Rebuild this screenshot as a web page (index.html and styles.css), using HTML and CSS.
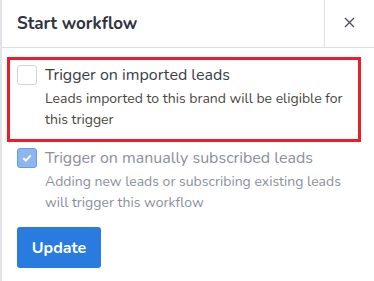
FILE: index.html
```html
<!DOCTYPE html>
<html lang="en">

<head>
    <meta charset="UTF-8">
    <meta name="viewport" content="width=device-width, initial-scale=1.0">
    <title>Start workflow</title>
    <link rel="stylesheet" href="styles.css">
</head>

<body>
    <div class="panel">
        <div class="header">
            <div class="title">Start workflow</div>
            <button class="close" aria-label="Close">
                <svg width="11" height="11" viewBox="0 0 11 11">
                    <path d="M1 1L10 10M10 1L1 10" stroke="#4a4d55" stroke-width="1.3" fill="none" />
                </svg>
            </button>
        </div>
        <form class="form">
            <label class="option highlight">
                <span class="check"></span>
                <span class="text">
                    <span class="label">Trigger on imported leads</span>
                    <span class="desc">Leads imported to this brand will be eligible for this trigger</span>
                </span>
            </label>
            <label class="option disabled">
                <span class="check checked">
                    <svg width="10" height="8" viewBox="0 0 10 8">
                        <path d="M1.2 4.2L3.8 6.6L8.8 1.4" stroke="#fff" stroke-width="2" fill="none" />
                    </svg>
                </span>
                <span class="text">
                    <span class="label">Trigger on manually subscribed leads</span>
                    <span class="desc">Adding new leads or subscribing existing leads will trigger this workflow</span>
                </span>
            </label>
            <div class="actions">
                <button type="button" class="update">Update</button>
            </div>
        </form>
    </div>
</body>

</html>
```

FILE: styles.css
```css
body {
    margin: 0;
    font-family: "Nunito", "Lato", sans-serif;
    background: #fff;
}

.panel {
    height: 281px;
    border-left: 2px solid #e2e4e9;
}

.header {
    display: flex;
    height: 47px;
    border-bottom: 1px solid #dcdfe5;
}

.title {
    flex: 1;
    display: flex;
    align-items: center;
    padding-left: 15px;
    font-size: 17px;
    font-weight: bold;
    color: #2f3340;
}

.close {
    width: 50px;
    border: none;
    border-left: 1px solid #dcdfe5;
    background: none;
    display: flex;
    align-items: center;
    justify-content: center;
    padding: 0 0 2px 0;
}

.form {
    display: flex;
    flex-direction: column;
    gap: 4px;
    padding: 12px 16px 0 8px;
}

.option {
    display: flex;
    gap: 8px;
    padding: 4px 7px 9px;
}

.highlight {
    outline: 3px solid #ec1c2a;
}

.check {
    flex: none;
    width: 18px;
    height: 18px;
    margin-top: 1px;
    border: 1px solid #cfd3da;
    border-radius: 3px;
    display: flex;
    align-items: center;
    justify-content: center;
}

.check.checked {
    background: #8db6ee;
    border-color: #5f9de9;
}

.text {
    display: flex;
    flex-direction: column;
    gap: 2px;
}

.label {
    font-size: 16px;
    line-height: 22px;
    color: #3a3e49;
}

.desc {
    font-size: 14px;
    line-height: 21px;
    color: #4a4740;
}

.disabled .label,
.disabled .desc {
    color: #8c909a;
}

.actions {
    padding: 1px 7px 0;
}

.update {
    width: 84px;
    height: 41px;
    border: none;
    border-radius: 3px;
    background: #2a7bdf;
    color: #fff;
    font-family: inherit;
    font-size: 16px;
    font-weight: bold;
}
```
